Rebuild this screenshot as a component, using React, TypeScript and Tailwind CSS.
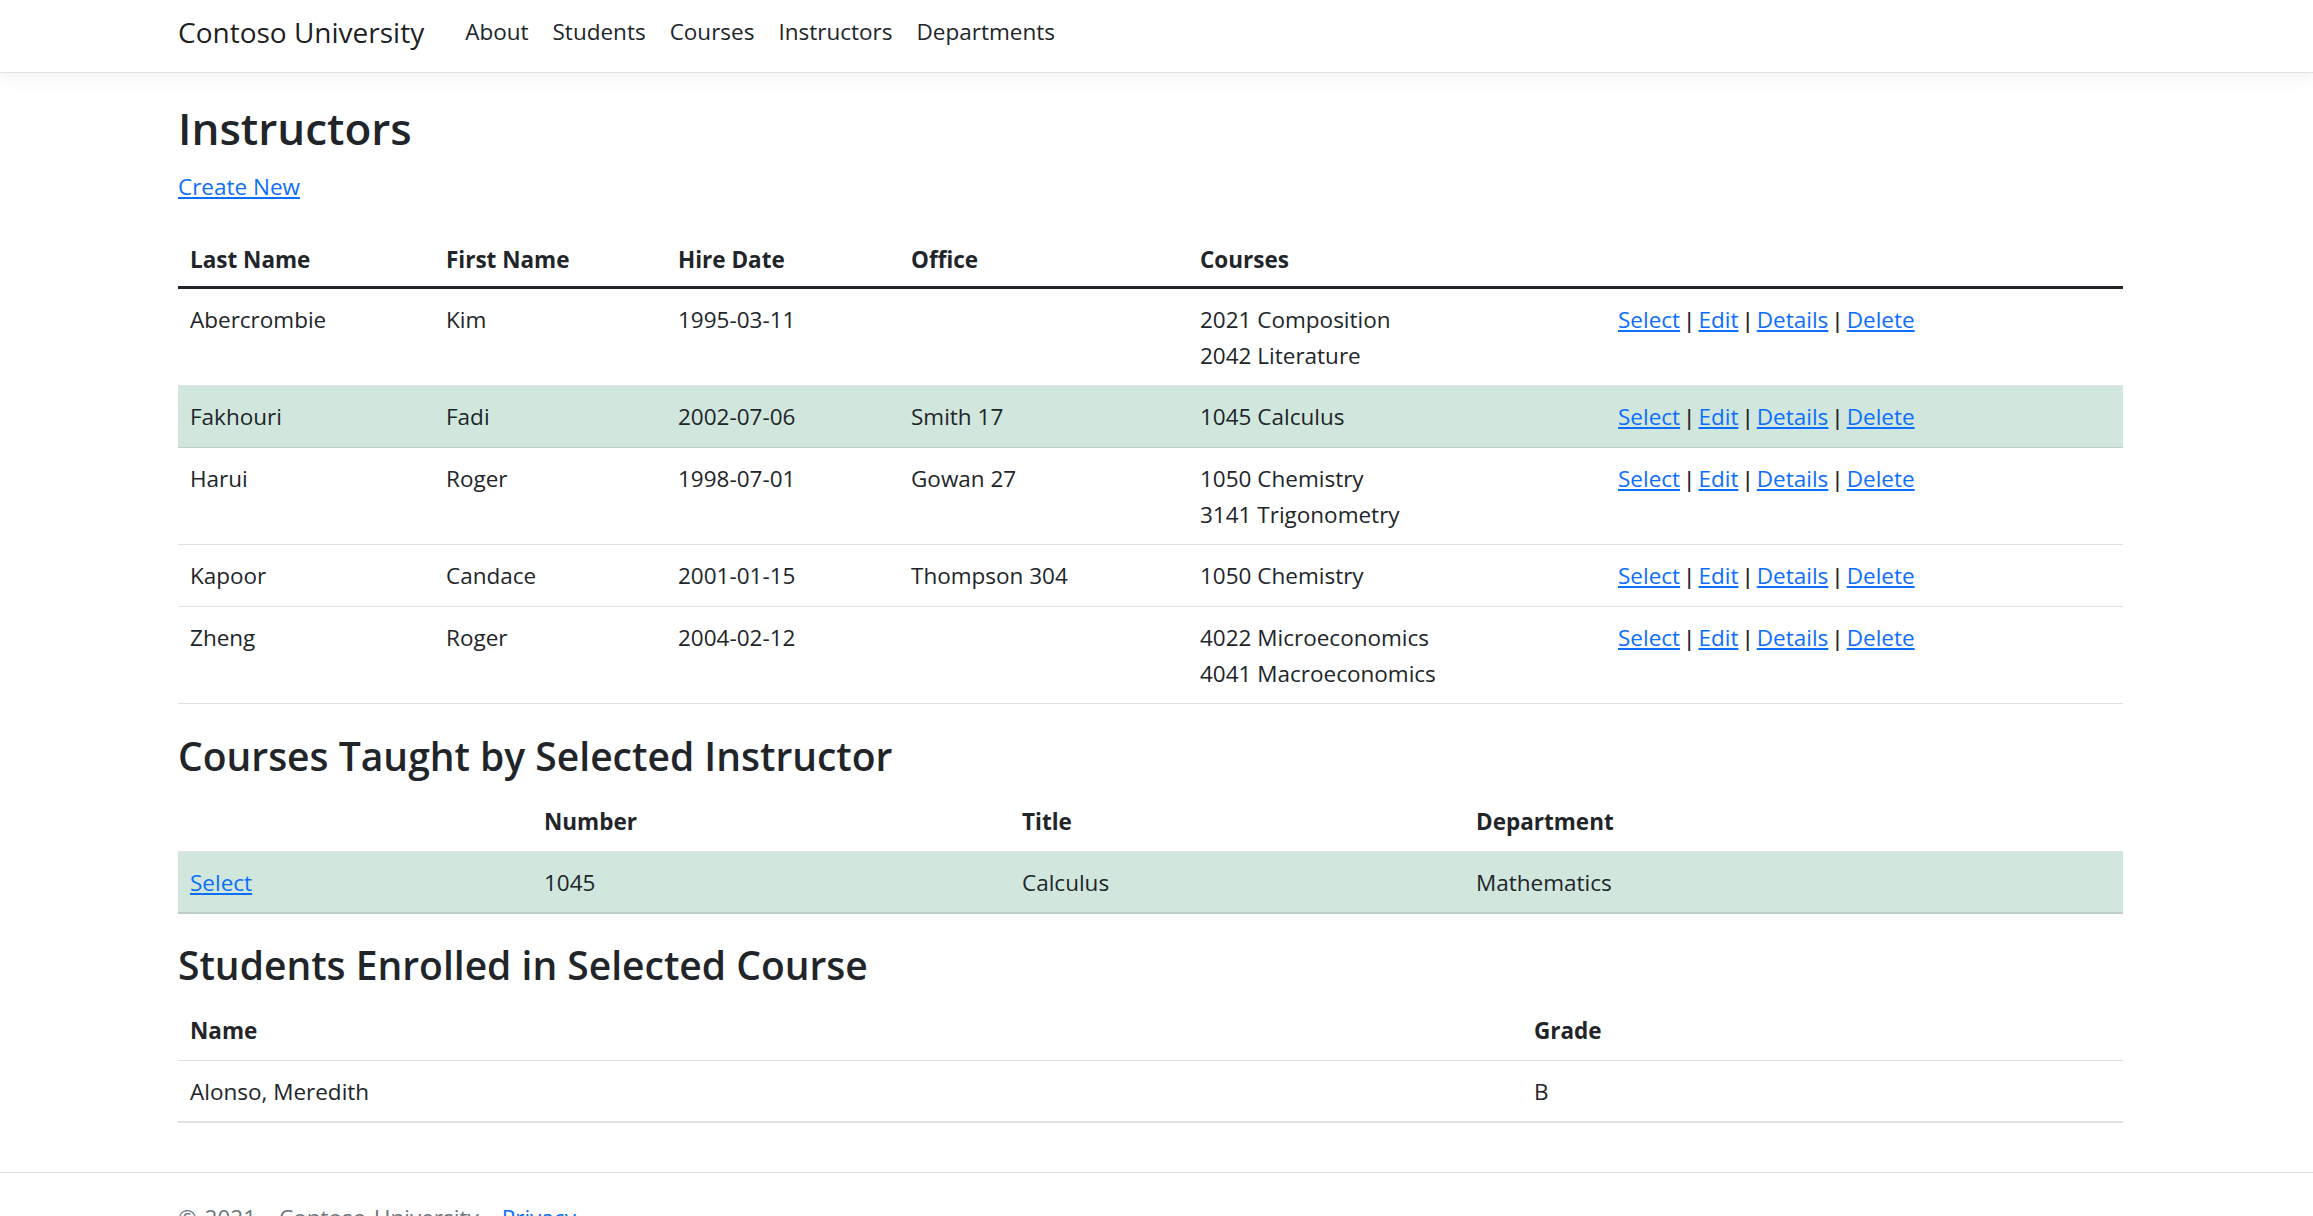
import React from "react";

type Instr = {
  last: string;
  first: string;
  hire: string;
  office: string;
  courses: string[];
  selected?: boolean;
};

const instructors: Instr[] = [
  { last: "Abercrombie", first: "Kim", hire: "1995-03-11", office: "", courses: ["2021 Composition", "2042 Literature"] },
  { last: "Fakhouri", first: "Fadi", hire: "2002-07-06", office: "Smith 17", courses: ["1045 Calculus"], selected: true },
  { last: "Harui", first: "Roger", hire: "1998-07-01", office: "Gowan 27", courses: ["1050 Chemistry", "3141 Trigonometry"] },
  { last: "Kapoor", first: "Candace", hire: "2001-01-15", office: "Thompson 304", courses: ["1050 Chemistry"] },
  { last: "Zheng", first: "Roger", hire: "2004-02-12", office: "", courses: ["4022 Microeconomics", "4041 Macroeconomics"] },
];

const cell = "px-[12px] pt-[13px] pb-[11px] align-top text-left";
const link = "text-[#0d6efd] underline";

function Sep() {
  return <span className="font-['Liberation_Sans',sans-serif] text-[#212529]"> | </span>;
}

export default function App() {
  return (
    <div className="font-['Open_Sans',sans-serif] text-[22.5px] leading-[36px] text-[#212529] bg-white">
      <nav className="h-[73px] border-b border-[#dee2e6] bg-white shadow-[0_6px_18px_rgba(0,0,0,0.05)]">
        <div className="flex h-[72px] items-center pb-[9px] pl-[178px]">
          <a className="mr-[29px] text-[28px] leading-[42px] text-[rgba(0,0,0,0.9)]">Contoso University</a>
          {["About", "Students", "Courses", "Instructors", "Departments"].map((l) => (
            <a key={l} className="px-[12px] text-[#212529]">
              {l}
            </a>
          ))}
        </div>
      </nav>

      <main className="pl-[178px] pt-[28px] pb-[49px]">
        <div className="w-[1945px]">
          <h1 className="mb-[13px] text-[44px] leading-[55px] font-semibold">Instructors</h1>
          <p className="mb-[21px]">
            <a className={link}>Create New</a>
          </p>

          <table className="w-[1945px] table-fixed border-separate border-spacing-0">
            <colgroup>
              <col className="w-[256px]" />
              <col className="w-[232px]" />
              <col className="w-[233px]" />
              <col className="w-[289px]" />
              <col className="w-[418px]" />
              <col className="w-[517px]" />
            </colgroup>
            <thead>
              <tr>
                {["Last Name", "First Name", "Hire Date", "Office", "Courses", ""].map((h, i) => (
                  <th key={i} className="px-[12px] pt-[16px] pb-[8px] text-left font-bold border-b-[3px] border-[#212529]">
                    {h}
                  </th>
                ))}
              </tr>
            </thead>
            <tbody>
              {instructors.map((r) => {
                const td = `${cell} border-b ${r.selected ? "bg-[#d1e7dd] border-[#bcd0c7]" : "border-[#dee2e6]"}`;
                return (
                  <tr key={r.last}>
                    <td className={td}>{r.last}</td>
                    <td className={td}>{r.first}</td>
                    <td className={td}>{r.hire}</td>
                    <td className={td}>{r.office}</td>
                    <td className={td}>
                      {r.courses.map((c) => (
                        <div key={c}>{c}</div>
                      ))}
                    </td>
                    <td className={td}>
                      <a className={link}>Select</a>
                      <Sep />
                      <a className={link}>Edit</a>
                      <Sep />
                      <a className={link}>Details</a>
                      <Sep />
                      <a className={link}>Delete</a>
                    </td>
                  </tr>
                );
              })}
            </tbody>
          </table>

          <h2 className="mt-[28px] mb-[11px] text-[39px] leading-[48px] font-semibold">Courses Taught by Selected Instructor</h2>
          <table className="w-[1945px] table-fixed border-separate border-spacing-0">
            <colgroup>
              <col className="w-[354px]" />
              <col className="w-[478px]" />
              <col className="w-[454px]" />
              <col className="w-[659px]" />
            </colgroup>
            <thead>
              <tr>
                {["", "Number", "Title", "Department"].map((h, i) => (
                  <th key={i} className={`${cell} font-bold border-b border-[#dee2e6]`}>
                    {h}
                  </th>
                ))}
              </tr>
            </thead>
            <tbody>
              <tr>
                <td className={`${cell} bg-[#d1e7dd] border-b-2 border-[#bcd0c7]`}>
                  <a className={link}>Select</a>
                </td>
                <td className={`${cell} bg-[#d1e7dd] border-b-2 border-[#bcd0c7]`}>1045</td>
                <td className={`${cell} bg-[#d1e7dd] border-b-2 border-[#bcd0c7]`}>Calculus</td>
                <td className={`${cell} bg-[#d1e7dd] border-b-2 border-[#bcd0c7]`}>Mathematics</td>
              </tr>
            </tbody>
          </table>

          <h2 className="mt-[27px] mb-[11px] text-[39px] leading-[48px] font-semibold">Students Enrolled in Selected Course</h2>
          <table className="w-[1945px] table-fixed border-separate border-spacing-0">
            <colgroup>
              <col className="w-[1344px]" />
              <col className="w-[601px]" />
            </colgroup>
            <thead>
              <tr>
                <th className={`${cell} font-bold border-b border-[#dee2e6]`}>Name</th>
                <th className={`${cell} font-bold border-b border-[#dee2e6]`}>Grade</th>
              </tr>
            </thead>
            <tbody>
              <tr>
                <td className={`${cell} border-b-2 border-[#dee2e6]`}>Alonso, Meredith</td>
                <td className={`${cell} border-b-2 border-[#dee2e6]`}>B</td>
              </tr>
            </tbody>
          </table>
        </div>
      </main>

      <footer className="border-t border-[#dee2e6] leading-[90px] text-[#6c757d]">
        <div className="pl-[178px] [word-spacing:2px]">
          © 2021 - Contoso University - <a className={link}>Privacy</a>
        </div>
      </footer>
    </div>
  );
}
